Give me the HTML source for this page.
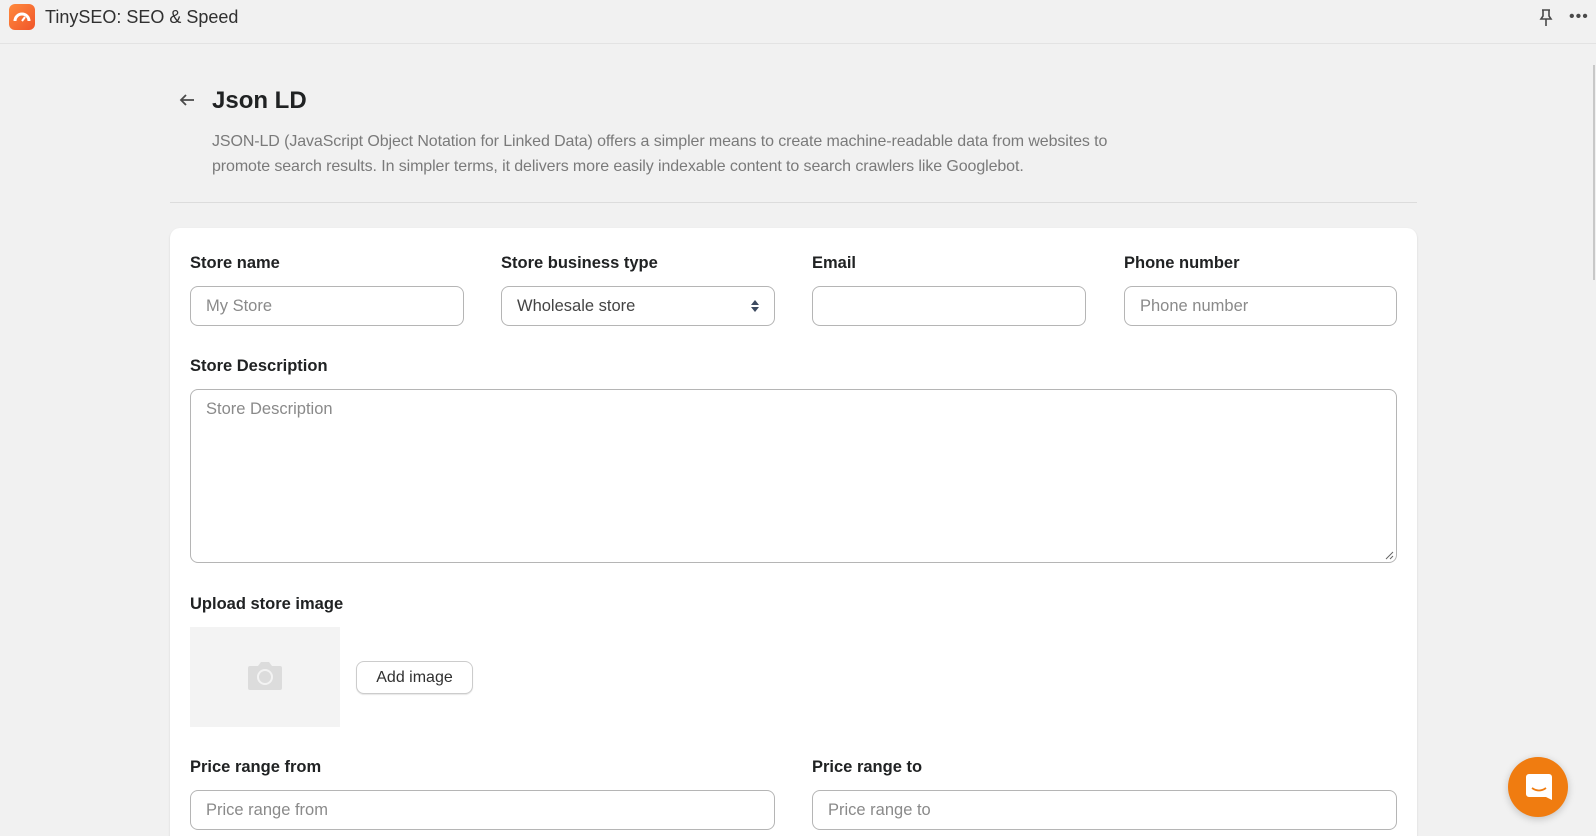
<!DOCTYPE html>
<html style="width:1596px;height:836px;overflow:hidden"><head><meta charset="utf-8"><style>
*{box-sizing:border-box;margin:0;padding:0}
body{width:1596px;height:836px;overflow:hidden;background:#f1f1f1;font-family:"Liberation Sans",sans-serif;color:#202223;position:relative}
.hdr{position:absolute;left:0;top:0;width:1596px;height:44px;border-bottom:1px solid #e3e3e3;background:#f1f1f1}
.logo{position:absolute;left:9px;top:4px;width:26px;height:26px;border-radius:6px;background:linear-gradient(135deg,#ff8a3d,#f0552a)}
.ht{position:absolute;left:45px;top:7px;font-size:18px;color:#303030}
.abs{position:absolute}
.lbl{position:absolute;font-size:16.5px;font-weight:bold;color:#202223}
.inp{position:absolute;height:40px;border:1px solid #b5b5b5;border-radius:8px;background:#fff;font-size:16.5px;color:#8a8a8a;padding:10px 15px}
.card{position:absolute;left:170px;top:228px;width:1247px;height:608px;background:#fff;border-radius:10px 10px 0 0;box-shadow:0 1px 2px rgba(0,0,0,.12)}
</style></head><body>
<div class="hdr">
<div class="logo"><svg width="26" height="26" viewBox="0 0 26 26"><path d="M6 17a7 7 0 0 1 14 0" fill="none" stroke="#fff" stroke-width="3"/><path d="M13 17l3-4" stroke="#fff" stroke-width="2"/></svg></div>
<div class="ht">TinySEO: SEO &amp; Speed</div>
<svg class="abs" style="left:1537px;top:8px" width="18" height="20" viewBox="0 0 18 20"><path d="M5 2h8M6 2v6l-2 3h10l-2-3V2M9 11v7" fill="none" stroke="#4a4a4a" stroke-width="1.6"/></svg>
<div class="abs" style="left:1569px;top:14px;font-size:16px;letter-spacing:1px;color:#4a4a4a;line-height:6px">•••</div>
</div>
<div class="abs" style="left:1593px;top:65px;width:2px;height:215px;background:#c8c8c8"></div>
<svg class="abs" style="left:178px;top:91px" width="18" height="18" viewBox="0 0 18 18"><path d="M16 9H3M8 4L3 9l5 5" fill="none" stroke="#4a4a4a" stroke-width="1.8"/></svg>
<div class="abs" style="left:212px;top:87px;font-size:24px;font-weight:bold;color:#202223">Json LD</div>
<div class="abs" style="left:212px;top:129px;width:950px;font-size:16px;line-height:25px;color:#7a7a7a;letter-spacing:-0.1px">JSON-LD (JavaScript Object Notation for Linked Data) offers a simpler means to create machine-readable data from websites to promote search results. In simpler terms, it delivers more easily indexable content to search crawlers like Googlebot.</div>
<div class="abs" style="left:170px;top:202px;width:1247px;height:1px;background:#dcdcdc"></div>
<div class="card"></div>
<div class="lbl" style="left:190px;top:254px">Store name</div>
<div class="lbl" style="left:501px;top:254px">Store business type</div>
<div class="lbl" style="left:812px;top:254px">Email</div>
<div class="lbl" style="left:1124px;top:254px">Phone number</div>
<div class="inp" style="left:190px;top:286px;width:274px">My Store</div>
<div class="inp" style="left:501px;top:286px;width:274px;color:#444">Wholesale store<svg style="position:absolute;right:14px;top:12px" width="10" height="14" viewBox="0 0 10 14"><path d="M1 6l4-5 4 5zM1 8l4 5 4-5z" fill="#3c4a60"/></svg></div>
<div class="inp" style="left:812px;top:286px;width:274px"></div>
<div class="inp" style="left:1124px;top:286px;width:273px">Phone number</div>
<div class="lbl" style="left:190px;top:357px">Store Description</div>
<div class="inp" style="left:190px;top:389px;width:1207px;height:174px">Store Description<svg style="position:absolute;right:2px;bottom:2px" width="10" height="10"><path d="M9 2L2 9M9 6L6 9" stroke="#666" stroke-width="1"/></svg></div>
<div class="lbl" style="left:190px;top:595px">Upload store image</div>
<div class="abs" style="left:190px;top:627px;width:150px;height:100px;background:#f3f3f3"></div>
<svg class="abs" style="left:246px;top:660px" width="38" height="32" viewBox="0 0 38 32"><path d="M4 6h8l3-4h8l3 4h8a2 2 0 0 1 2 2v20a2 2 0 0 1-2 2H4a2 2 0 0 1-2-2V8a2 2 0 0 1 2-2z" fill="#dcdcdc"/><circle cx="19" cy="17" r="8" fill="#f3f3f3"/><circle cx="19" cy="17" r="6" fill="#dcdcdc"/></svg>
<div class="abs" style="left:356px;top:661px;width:117px;height:33px;border:1px solid #ccc;border-radius:8px;background:#fff;box-shadow:0 1px 1px rgba(0,0,0,.1);font-size:16px;color:#303030;text-align:center;line-height:31px">Add image</div>
<div class="lbl" style="left:190px;top:758px">Price range from</div>
<div class="lbl" style="left:812px;top:758px">Price range to</div>
<div class="inp" style="left:190px;top:790px;width:585px">Price range from</div>
<div class="inp" style="left:812px;top:790px;width:585px">Price range to</div>
<div class="abs" style="left:1508px;top:757px;width:60px;height:60px;border-radius:50%;background:#f07c10;box-shadow:0 2px 8px rgba(0,0,0,.2)"></div>
<svg class="abs" style="left:1525px;top:773px" width="28" height="30" viewBox="0 0 28 30"><path d="M4 1h20a3 3 0 0 1 3 3v23l-6-3H4a3 3 0 0 1-3-3V4a3 3 0 0 1 3-3z" fill="#fff"/><path d="M7 15q7 5 14 0" fill="none" stroke="#f07c10" stroke-width="1.8"/></svg>
</body></html>
